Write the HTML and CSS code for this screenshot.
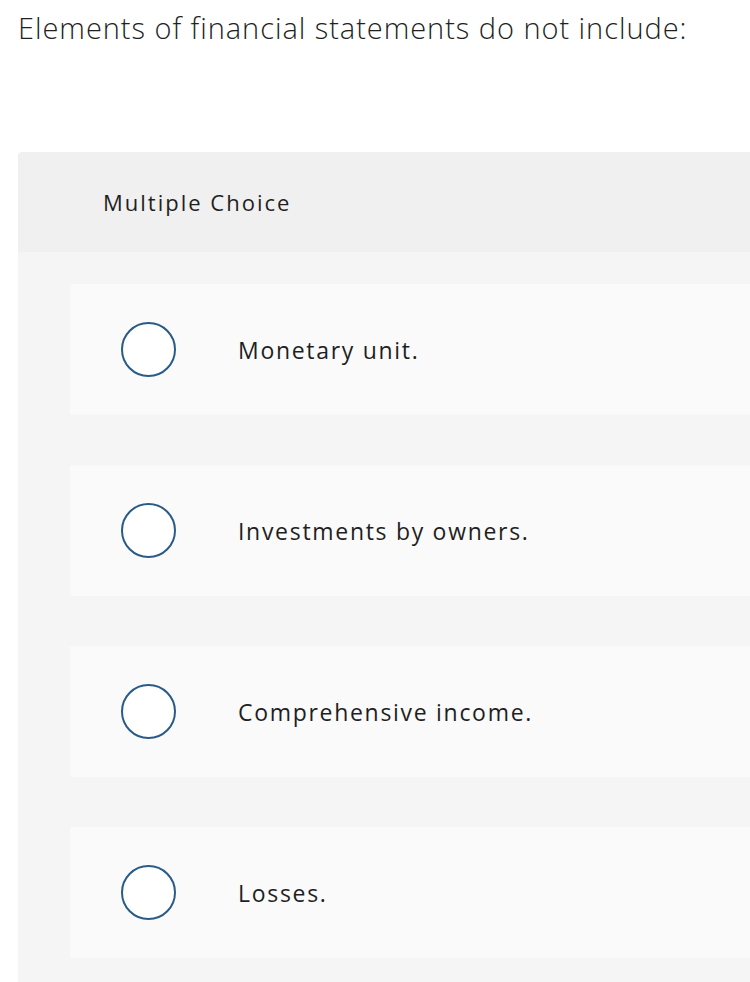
FILE: index.html
```html
<!DOCTYPE html>
<html lang="en">
<head>
<meta charset="utf-8">
<title>Multiple Choice</title>
<link rel="stylesheet" href="styles.css">
</head>
<body>
<div class="page">
  <p class="question">Elements of financial statements do not include:</p>
  <div class="panel">
    <div class="panel-head">Multiple Choice</div>
    <div class="panel-body">
      <div class="option"><span class="radio"></span><span class="label">Monetary unit.</span></div>
      <div class="option"><span class="radio"></span><span class="label">Investments by owners.</span></div>
      <div class="option"><span class="radio"></span><span class="label">Comprehensive income.</span></div>
      <div class="option"><span class="radio"></span><span class="label">Losses.</span></div>
    </div>
  </div>
</div>
</body>
</html>
```
FILE: styles.css
```css
html, body {
  margin: 0;
  padding: 0;
  background: #ffffff;
  overflow: hidden;
}
.page {
  width: 750px;
  height: 982px;
  overflow: hidden;
  font-family: "Open Sans", Lato, sans-serif;
  color: #1f1f1f;
}
.question {
  margin: 0;
  padding: 8px 0 0 18px;
  font-size: 29px;
  font-weight: 300;
  letter-spacing: 0.95px;
  line-height: 40px;
  height: 142px;
  box-sizing: border-box;
  white-space: nowrap;
}
.panel {
  margin: 10px 0 0 18px;
  width: 760px;
  border-radius: 4px 0 0 0;
  overflow: hidden;
}
.panel-head {
  height: 100px;
  background: #f0f0f0;
  display: flex;
  align-items: center;
  padding-left: 85px;
  font-size: 22px;
  letter-spacing: 2px;
}
.panel-body {
  background: #f5f5f5;
  padding: 32px 0 40px 52px;
  display: flex;
  flex-direction: column;
  gap: 50px;
}
.option {
  height: 131px;
  background: #fafafa;
  border-radius: 3px 0 0 3px;
  display: flex;
  align-items: center;
  padding-left: 51px;
}
.radio {
  width: 51px;
  height: 51px;
  border: 2px solid #285b87;
  border-radius: 50%;
  background: #ffffff;
  flex: none;
}
.label {
  margin-left: 62px;
  font-size: 23px;
  letter-spacing: 1.7px;
}
```
